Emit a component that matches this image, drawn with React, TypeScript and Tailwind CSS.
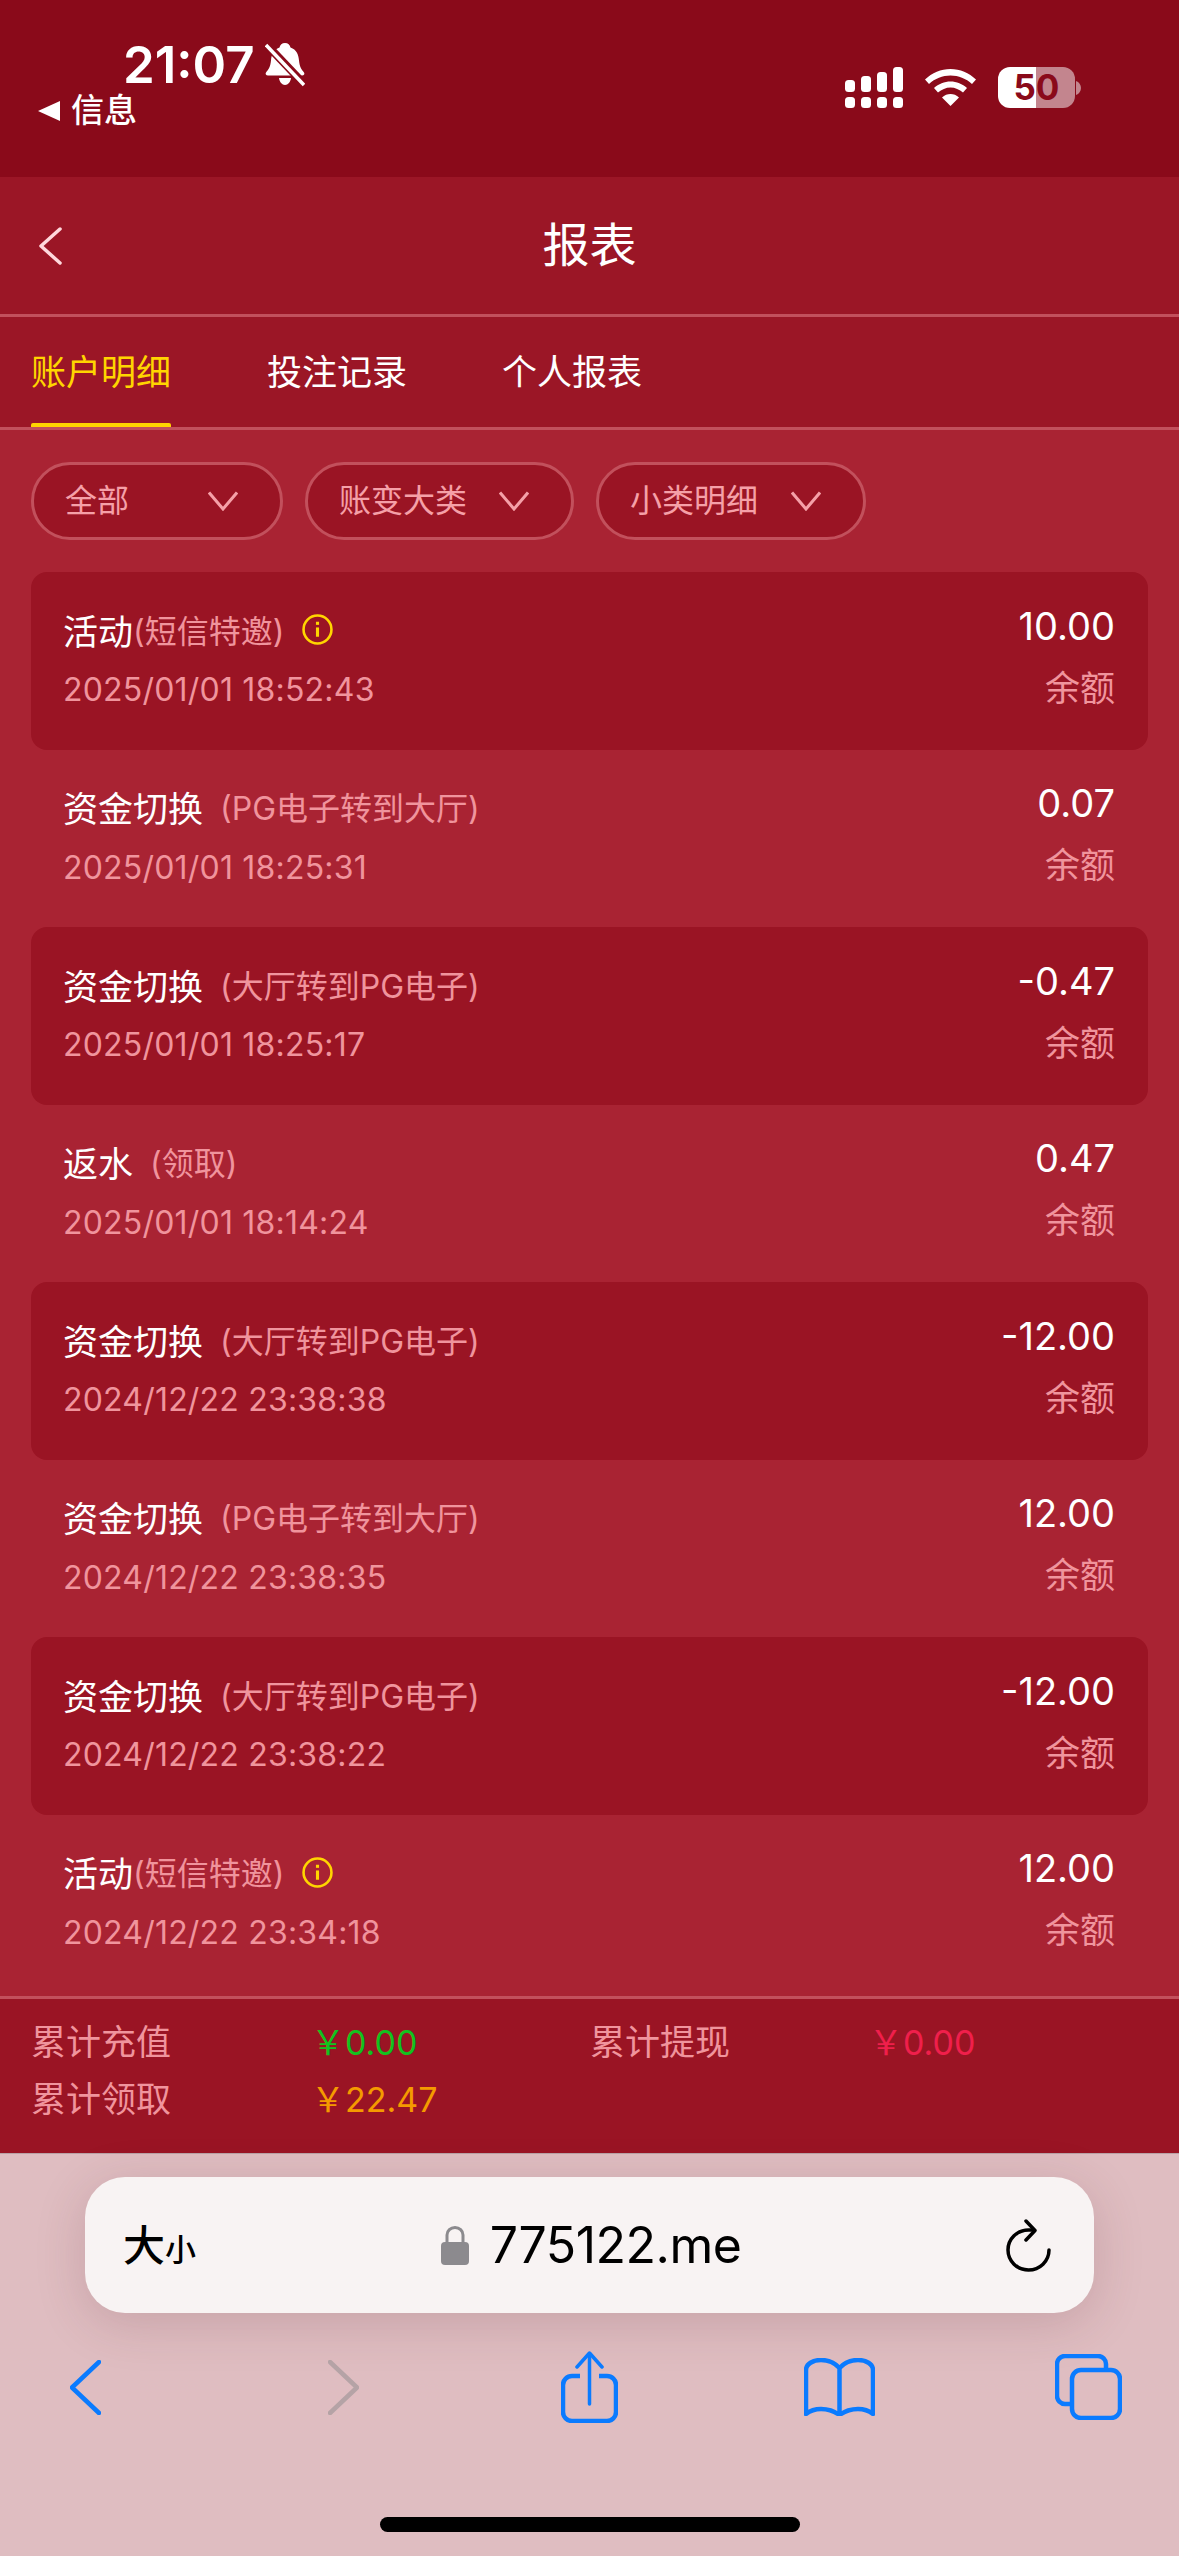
const rows = [
  { title: '活动', sub: '(短信特邀)', info: true, date: '2025/01/01 18:52:43', amount: '10.00' },
  { title: '资金切换', sub: '(PG电子转到大厅)', date: '2025/01/01 18:25:31', amount: '0.07' },
  { title: '资金切换', sub: '(大厅转到PG电子)', date: '2025/01/01 18:25:17', amount: '-0.47' },
  { title: '返水', sub: '(领取)', date: '2025/01/01 18:14:24', amount: '0.47' },
  { title: '资金切换', sub: '(大厅转到PG电子)', date: '2024/12/22 23:38:38', amount: '-12.00' },
  { title: '资金切换', sub: '(PG电子转到大厅)', date: '2024/12/22 23:38:35', amount: '12.00' },
  { title: '资金切换', sub: '(大厅转到PG电子)', date: '2024/12/22 23:38:22', amount: '-12.00' },
  { title: '活动', sub: '(短信特邀)', info: true, date: '2024/12/22 23:34:18', amount: '12.00' },
]

function Chevron() {
  return (
    <svg width="30" height="20" viewBox="0 0 30 20" fill="none" stroke="#f5a0a8" strokeWidth="3">
      <path d="M1 1.5 15 18 29 1.5" />
    </svg>
  )
}

function StatusBar() {
  return (
    <div className="flex h-[177px] justify-between bg-[#8a0a1a] text-white">
      <div className="pt-[39px]">
        <div className="flex items-center pl-[123px]">
          <span className="text-[51px] leading-[52px] font-semibold">21:07</span>
          <svg className="ml-[10px]" width="40" height="44" viewBox="0 0 40 44" fill="white">
            <path d="M20 0c3 0 5 2 5.500 4.500 6 2 8 7 8.500 13 .5 6 2.500 9 5 12 1 1.500 0 3-2 3H3c-2 0-3-1.500-2-3 2.500-3 4.500-6 5-12 .5-6 2.500-11 8.500-13C15 2 17 0 20 0Z" />
            <path d="M14 35h12c-.5 4-3 7-6 7s-5.500-3-6-7Z" />
            <path d="M1 1 39 41" stroke="#8a0a1a" strokeWidth="8" />
            <path d="M1 2 39 42" stroke="white" strokeWidth="3.500" />
          </svg>
        </div>
        <div className="flex h-[40px] items-center pl-[38px] text-[33px] font-medium">
          <svg className="mr-[11px]" width="22" height="20" viewBox="0 0 22 20" fill="white">
            <path d="M22 0v20L0 10Z" />
          </svg>
          信息
        </div>
      </div>
      <div className="flex items-start gap-[22px] pt-[67px] pr-[98px]">
        <svg className="ml-[1px]" width="58" height="41" viewBox="0 0 58 41" fill="white">
          <rect x="0" y="13" width="10" height="12" rx="3.500" />
          <rect x="16" y="9" width="10" height="16" rx="3.500" />
          <rect x="32" y="5" width="10" height="20" rx="3.500" />
          <rect x="48" y="0" width="10" height="25" rx="3.500" />
          <rect x="0" y="30" width="10" height="11" rx="3.500" />
          <rect x="16" y="30" width="10" height="11" rx="3.500" />
          <rect x="32" y="30" width="10" height="11" rx="3.500" />
          <rect x="48" y="30" width="10" height="11" rx="3.500" />
        </svg>
        <svg className="mt-[2px]" width="51" height="37" viewBox="0 0 51 37" fill="white">
          <path d="M25.500 0C35 0 44 4 51 10.500l-4 4.500C41 9.500 33.500 6.500 25.500 6.500S10 9.500 4 15L0 10.500C7 4 16 0 25.500 0Z" />
          <path d="M25.500 12.500c6 0 12 2.500 16.500 6.500l-4 4.500c-3.500-3-8-5-12.500-5S16.500 20.500 13 23.500L9 19c4.500-4 10.500-6.500 16.500-6.500Z" />
          <path d="M25.500 25c3 0 6 1 8.500 3.500L25.500 37 17 28.500C19.500 26 22.500 25 25.500 25Z" />
        </svg>
        <div className="flex items-center gap-[1px]">
          <div className="flex h-[41px] w-[77px] items-center justify-center rounded-[12px] bg-[linear-gradient(90deg,#ffffff_50%,#c3858e_50%)] text-[35px] font-bold text-[#8a0a1a]">
            50
          </div>
          <svg width="5" height="14" viewBox="0 0 5 14" fill="#c3858e">
            <path d="M0 0c3 1 5 4 5 7s-2 6-5 7Z" />
          </svg>
        </div>
      </div>
    </div>
  )
}

function Filter({ label, width }: { label: string; width: string }) {
  return (
    <div className={`flex h-[78px] items-center justify-between rounded-full border-[3px] border-[#c2505c] bg-[#9a1424] pr-[42px] pl-[31px] text-[32px] text-[#f5a0a8] ${width}`}>
      <span>{label}</span>
      <Chevron />
    </div>
  )
}

function Row({ row, shaded }: { row: (typeof rows)[number]; shaded: boolean }) {
  return (
    <div className={`flex h-[177.500px] items-center justify-between rounded-[16px] pr-[33px] pl-[32px] ${shaded ? 'bg-[#9a1424]' : ''}`}>
      <div>
        <div className="flex h-[44px] items-center pt-[1px] text-[35px] text-white">
          {row.title}
          <span className={`text-[32px] text-[#f0949d] ${row.info ? '' : 'ml-[17px]'}`}>{row.sub}</span>
          {row.info && (
            <svg className="mb-[4px] ml-[18px]" width="31" height="31" viewBox="0 0 30 30" fill="none" stroke="#ffd500">
              <circle cx="15" cy="15" r="13.500" strokeWidth="2.500" />
              <path d="M15 13v9" strokeWidth="3" />
              <path d="M15 7.500v3" strokeWidth="3" />
            </svg>
          )}
        </div>
        <div className="mt-[15px] text-[32px] leading-[44px] tracking-[0.2px] text-[#f0949d]">{row.date}</div>
      </div>
      <div className="pb-[12px] text-right">
        <div className="mb-[14px] text-[38px] leading-[52px] text-white">{row.amount}</div>
        <div className="text-[35px] leading-[44px] text-[#f0949d]">余额</div>
      </div>
    </div>
  )
}

function Toolbar() {
  return (
    <div className="flex h-[403px] flex-col border-t border-[#b9a2a6] bg-[#dfbdc1] pt-[23px]">
      <div className="mx-[85px] grid h-[136px] grid-cols-[1fr_auto_1fr] items-center rounded-[40px] bg-[#f8f3f3] pr-[43px] pl-[38px] shadow-[0_10px_50px_rgba(90,40,50,0.18)]">
        <div className="flex items-baseline font-medium text-black">
          <span className="text-[42px]">大</span>
          <span className="text-[31px]">小</span>
        </div>
        <div className="ml-[8px] flex items-center gap-[21px]">
          <svg width="28" height="39" viewBox="0 0 28 39" fill="none">
            <path d="M6 18V9a8 7.500 0 0 1 16 0v9" stroke="#8c8a8e" strokeWidth="3" />
            <rect x="0" y="16" width="28" height="23" rx="4" fill="#8c8a8e" />
          </svg>
          <span className="text-[50px] leading-[60px] tracking-[-0.5px] text-black">775122.me</span>
        </div>
        <svg className="justify-self-end" width="45" height="53" viewBox="0 0 45 53" fill="none" stroke="black" strokeWidth="3.500" strokeLinecap="round" strokeLinejoin="round">
          <path d="M43 31a20.500 20 0 1 1-20.500-20h5" />
          <path d="M20 2l9 9.500-9 9.500" />
        </svg>
      </div>
      <div className="mt-[24px] flex h-[100px] items-center pl-[70px]">
        <svg width="31" height="55" viewBox="0 0 31 55" fill="none" stroke="#0a7bff" strokeWidth="4.500" strokeLinecap="round" strokeLinejoin="round">
          <path d="M29 2 2 27.500 29 53" />
        </svg>
        <svg className="ml-[227px]" width="31" height="55" viewBox="0 0 31 55" fill="none" stroke="#b5a3a6" strokeWidth="4.500" strokeLinecap="round" strokeLinejoin="round">
          <path d="M2 2 29 27.500 2 53" />
        </svg>
        <svg className="ml-[202px]" width="57" height="72" viewBox="0 0 57 72" fill="none" stroke="#0a7bff" strokeWidth="4.500" strokeLinecap="round" strokeLinejoin="round">
          <path d="M19 25H11a9 9 0 0 0-9 9v27a9 9 0 0 0 9 9h35a9 9 0 0 0 9-9V34a9 9 0 0 0-9-9h-8" strokeLinecap="butt" />
          <path d="M28.500 3v50" strokeWidth="3.500" />
          <path d="M16 16 28.500 2 41 16" strokeWidth="3.500" />
        </svg>
        <svg className="ml-[186px]" width="71" height="58" viewBox="0 0 71 58" fill="none" stroke="#0a7bff" strokeWidth="4.500" strokeLinecap="round" strokeLinejoin="round">
          <path d="M35.500 10C30 4 24 2 17 2 9 2 2 6 2 12v44c5-4 10-5 15-5 7 0 13 2 18.500 6 5.500-4 11.500-6 18.500-6 5 0 10 1 15 5V12c0-6-7-10-15-10-7 0-13 2-18.500 8Zm0 0v47" />
        </svg>
        <svg className="ml-[180px]" width="67" height="66" viewBox="0 0 67 66" fill="none" stroke="#0a7bff" strokeWidth="4.500">
          <path d="M16 50H10a8 8 0 0 1-8-8V10a8 8 0 0 1 8-8h33a8 8 0 0 1 8 8v6" />
          <rect x="17" y="16" width="48" height="48" rx="9" />
        </svg>
      </div>
      <div className="mx-auto mt-[80px] h-[15px] w-[420px] rounded-full bg-black" />
    </div>
  )
}

export default function App() {
  return (
    <div className="h-[2556px] w-[1179px] overflow-hidden bg-[#a92333] font-[Inter,'Noto_Sans_CJK_SC',sans-serif]">
      <StatusBar />

      <div className="grid h-[137px] grid-cols-[1fr_auto_1fr] items-center bg-[#9b1626] pl-[38px] text-[47px] text-white">
        <svg width="24" height="38" viewBox="0 0 24 38" fill="none" stroke="#ffd8dc" strokeWidth="3.500" strokeLinecap="round" strokeLinejoin="round">
          <path d="M22 2 3 19 22 36" />
        </svg>
        <span className="-translate-x-[19px]">报表</span>
      </div>

      <div className="flex h-[116px] gap-[96px] border-y-[3px] border-[#c2505c] bg-[#9b1626] pl-[31px] text-[35px] text-white">
        <div className="flex w-[140px] flex-col justify-between whitespace-nowrap text-[#ffd500]">
          <span className="pt-[30px] leading-[50px]">账户明细</span>
          <div className="h-[4px] rounded-t-[2px] bg-[#ffd500]" />
        </div>
        <span className="pt-[30px] leading-[50px]">投注记录</span>
        <span className="-ml-[1px] pt-[30px] leading-[50px]">个人报表</span>
      </div>

      <div className="px-[31px] pt-[32px] pb-[4px]">
        <div className="flex gap-[22px]">
          <Filter label="全部" width="w-[252px]" />
          <Filter label="账变大类" width="w-[269px]" />
          <Filter label="小类明细" width="w-[270px]" />
        </div>
        <div className="mt-[32px]">
          {rows.map((row, i) => (
            <Row key={i} row={row} shaded={i % 2 === 0} />
          ))}
        </div>
      </div>

      <div className="h-[157px] border-t-[3px] border-[#c2505c] bg-[#9a1424] pt-[15px] pl-[31px] leading-[57px]">
        <div className="grid grid-cols-[280px_279px_279px_1fr] text-[34px]">
          <span className="text-[35px] text-[#f0949d]">累计充值</span>
          <span className="text-[#12c21f]">￥0.00</span>
          <span className="text-[35px] text-[#f0949d]">累计提现</span>
          <span className="text-[#f01f4b]">￥0.00</span>
          <span className="text-[35px] text-[#f0949d]">累计领取</span>
          <span className="text-[#f59a00]">￥22.47</span>
        </div>
      </div>

      <Toolbar />
    </div>
  )
}
